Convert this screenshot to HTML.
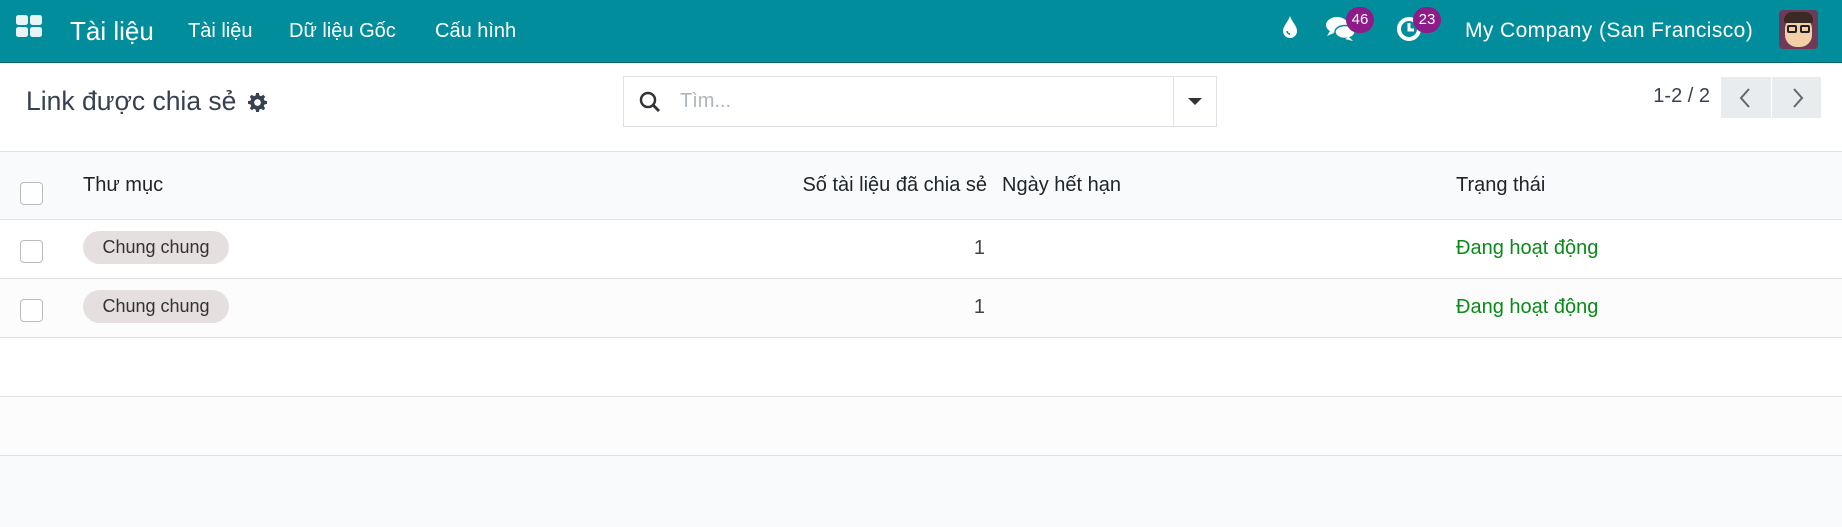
<!DOCTYPE html>
<html><head><meta charset="utf-8"><style>
*{box-sizing:border-box;margin:0;padding:0}
body{width:1842px;height:527px;overflow:hidden;background:#f9fafb;font-family:"Liberation Sans","DejaVu Sans",sans-serif;color:#212529;position:relative}
.abs{position:absolute}
.nav{left:0;top:0;width:1842px;height:63px;background:#018d9b;border-bottom:1px solid #016570;color:#fff}
.nav .t{position:absolute;top:2px;line-height:58px;white-space:nowrap}
.cp{left:0;top:63px;width:1842px;height:89px;background:#fff;border-bottom:1px solid #dee2e6}
.row{left:0;width:1842px;border-bottom:1px solid #dee2e6}
.cb{position:absolute;left:20px;width:23px;height:23px;border:1px solid #b8bcc0;border-radius:4px;background:#fff}
.tag{position:absolute;left:83px;width:146px;height:33px;border-radius:17px;background:#e6dfdf;color:#333;font-size:18px;line-height:33px;text-align:center}
.txt{position:absolute;font-size:20px;white-space:nowrap}
.badge{position:absolute;height:26px;min-width:28px;border-radius:13px;background:#8d1b8a;color:#fff;font-size:15px;line-height:26px;text-align:center}
</style></head><body>
<div class="abs nav">
 <svg class="abs" style="left:16px;top:15px" width="27" height="23" viewBox="0 0 27 23"><rect x="0" y="0" width="12" height="10" rx="2.5" fill="#e8f4f5"/><rect x="14" y="0" width="12" height="10" rx="2.5" fill="#e8f4f5"/><rect x="0" y="12" width="12" height="10" rx="2.5" fill="#e8f4f5"/><rect x="14" y="12" width="12" height="10" rx="2.5" fill="#e8f4f5"/></svg>
 <div class="t" style="left:70px;font-size:26px">Tài liệu</div>
 <div class="t" style="left:188px;font-size:20px">Tài liệu</div>
 <div class="t" style="left:289px;font-size:20px">Dữ liệu Gốc</div>
 <div class="t" style="left:435px;font-size:20px">Cấu hình</div>
 <svg class="abs" style="left:1282px;top:15px" width="16" height="24" viewBox="0 0 16 24"><path d="M8 1C6 7 1 11 1 16a7 7 0 0 0 14 0C15 11 10 7 8 1z" fill="#fff"/><path d="M5 16a3 3 0 0 0 3 3" stroke="#018d9b" stroke-width="1.5" fill="none"/></svg>
 <svg class="abs" style="left:1325px;top:15px" width="32" height="28" viewBox="0 0 32 28"><ellipse cx="12" cy="10" rx="11" ry="8" fill="#fff"/><path d="M5 16l-3 5 7-3z" fill="#fff"/><ellipse cx="20" cy="17" rx="10" ry="6.5" fill="#fff" stroke="#018d9b" stroke-width="1.5"/><path d="M24 22l4 4-8-2z" fill="#fff"/></svg>
 <div class="badge" style="left:1346px;top:7px">46</div>
 <svg class="abs" style="left:1396px;top:15px" width="28" height="28" viewBox="0 0 28 28"><circle cx="13" cy="14" r="10" fill="none" stroke="#fff" stroke-width="4"/><path d="M13 8v7h5" stroke="#fff" stroke-width="3" fill="none"/></svg>
 <div class="badge" style="left:1413px;top:7px">23</div>
 <div class="t" style="left:1465px;font-size:21px;letter-spacing:.4px">My Company (San Francisco)</div>
 <div class="abs" style="left:1779px;top:10px;width:39px;height:39px;border-radius:4px;background:#6e3a58;overflow:hidden">
  <div class="abs" style="left:6px;top:7px;width:27px;height:30px;border-radius:12px;background:#f3cfa8"></div>
  <div class="abs" style="left:5px;top:2px;width:29px;height:11px;border-radius:8px 8px 2px 2px;background:#3a2a24"></div>
  <div class="abs" style="left:8px;top:15px;width:10px;height:8px;border:2px solid #222;border-radius:2px"></div>
  <div class="abs" style="left:21px;top:15px;width:10px;height:8px;border:2px solid #222;border-radius:2px"></div>
 </div>
</div>
<div class="abs cp">
 <div class="txt" style="left:26px;top:23px;font-size:26.5px;color:#374151">Link được chia sẻ</div>
 <svg class="abs" style="left:248px;top:30px" width="19" height="19" viewBox="0 0 20 20"><path fill="#374151" d="M8.5 0h3l.5 2.6 1.8.8 2.2-1.5 2.1 2.1-1.5 2.2.8 1.8 2.6.5v3l-2.6.5-.8 1.8 1.5 2.2-2.1 2.1-2.2-1.5-1.8.8-.5 2.6h-3l-.5-2.6-1.8-.8-2.2 1.5-2.1-2.1 1.5-2.2-.8-1.8L0 11.5v-3l2.6-.5.8-1.8-1.5-2.2 2.1-2.1 2.2 1.5 1.8-.8zM10 6.5a3.5 3.5 0 1 0 0 7 3.5 3.5 0 0 0 0-7z"/></svg>
 <div class="abs" style="left:623px;top:13px;width:594px;height:51px;border:1px solid #dee2e6;background:#fff">
  <svg class="abs" style="left:14px;top:13px" width="24" height="24" viewBox="0 0 24 24"><circle cx="10" cy="10" r="7" stroke="#333" stroke-width="2.5" fill="none"/><path d="M15 15l6 6" stroke="#333" stroke-width="2.8"/></svg>
  <div class="txt" style="left:56px;top:13px;color:#adb5bd">Tìm...</div>
  <div class="abs" style="left:549px;top:0;width:1px;height:49px;background:#dee2e6"></div>
  <div class="abs" style="left:564px;top:21px;width:0;height:0;border-left:7px solid transparent;border-right:7px solid transparent;border-top:7px solid #333"></div>
 </div>
 <div class="txt" style="right:132px;top:22px;color:#374151">1-2 / 2</div>
 <div class="abs" style="left:1721px;top:14px;width:50px;height:41px;background:#e9ecef"></div>
 <div class="abs" style="left:1772px;top:14px;width:49px;height:41px;background:#e9ecef"></div>
 <svg class="abs" style="left:1736px;top:24px" width="20" height="22" viewBox="0 0 20 22"><path d="M13 2L5 11l8 9" stroke="#666" stroke-width="2" fill="none"/></svg>
 <svg class="abs" style="left:1787px;top:24px" width="20" height="22" viewBox="0 0 20 22"><path d="M7 2l8 9-8 9" stroke="#666" stroke-width="2" fill="none"/></svg>
</div>
<div class="abs row" style="top:152px;height:68px;background:#f9fafb">
 <div class="cb" style="top:30px"></div>
 <div class="txt" style="left:83px;top:22px">Thư mục</div>
 <div class="txt" style="right:855px;top:22px">Số tài liệu đã chia sẻ</div>
 <div class="txt" style="left:1002px;top:22px">Ngày hết hạn</div>
 <div class="txt" style="left:1456px;top:22px">Trạng thái</div>
</div>
<div class="abs row" style="top:220px;height:59px;background:#fff">
 <div class="cb" style="top:20px"></div>
 <div class="tag" style="top:11px">Chung chung</div>
 <div class="txt" style="right:857px;top:17px;color:#444">1</div>
 <div class="txt" style="left:1456px;top:17px;color:#0a8a18">Đang hoạt động</div>
</div>
<div class="abs row" style="top:279px;height:59px;background:#fcfcfd">
 <div class="cb" style="top:20px"></div>
 <div class="tag" style="top:11px">Chung chung</div>
 <div class="txt" style="right:857px;top:17px;color:#444">1</div>
 <div class="txt" style="left:1456px;top:17px;color:#0a8a18">Đang hoạt động</div>
</div>
<div class="abs row" style="top:338px;height:59px;background:#fff"></div>
<div class="abs row" style="top:397px;height:59px;background:#fcfcfd"></div>
</body></html>
